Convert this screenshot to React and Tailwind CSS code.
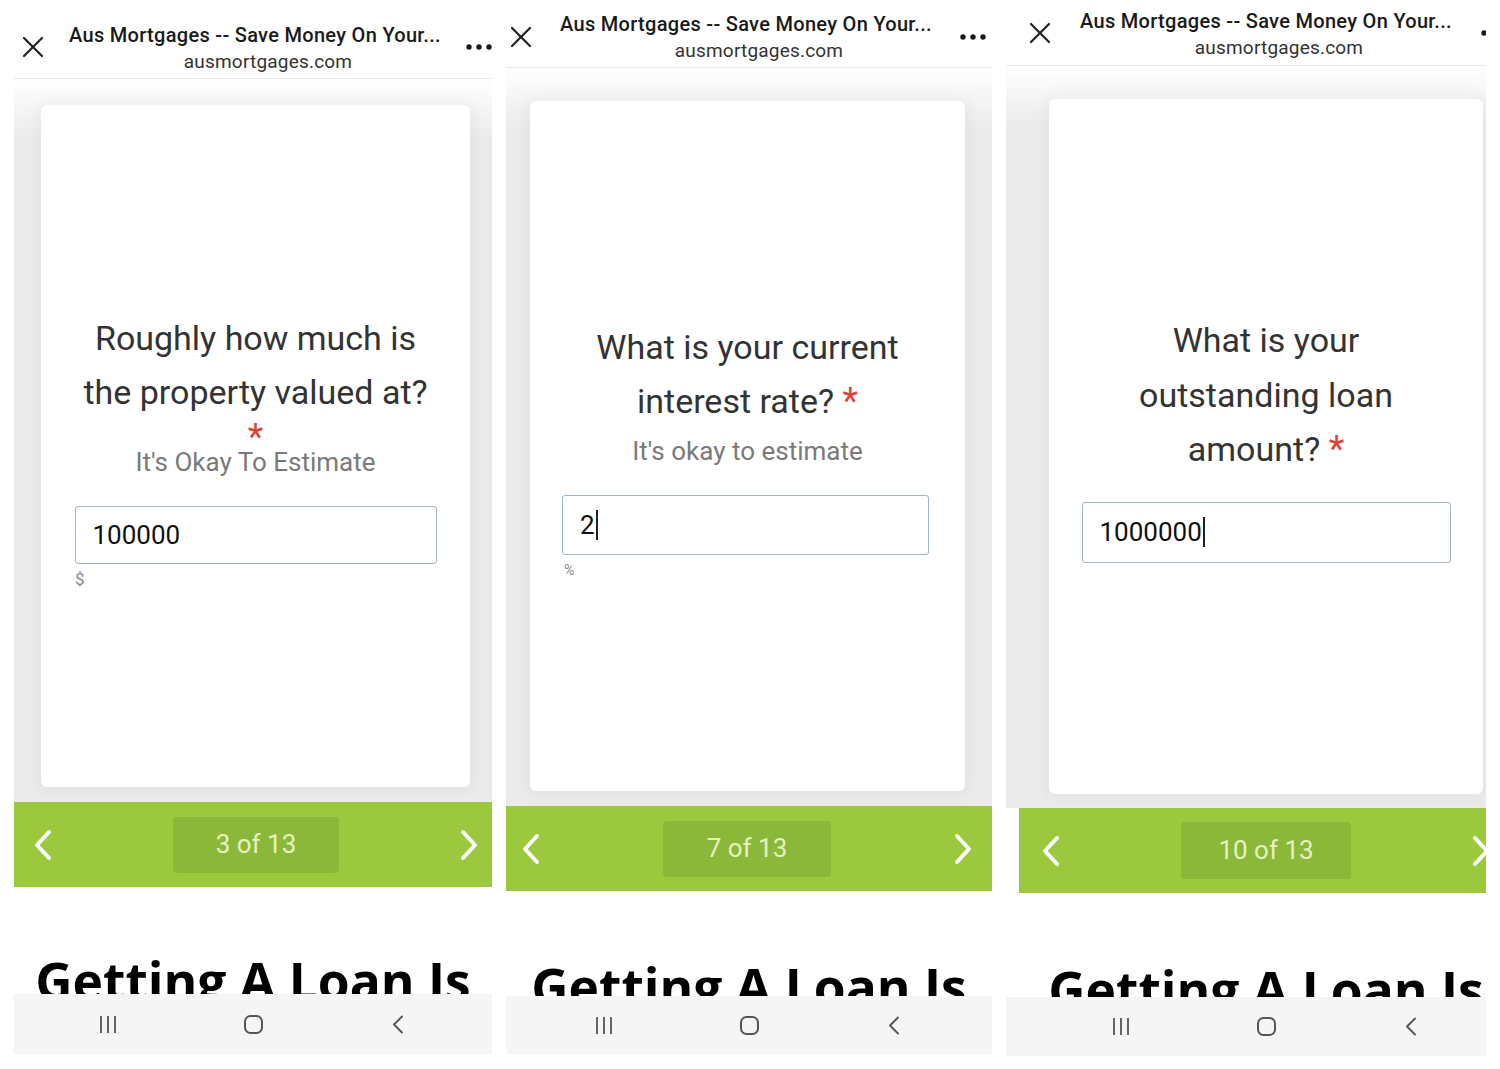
import React from 'react';

const XIcon = () => (
    <svg width="22" height="22" viewBox="0 0 22 22" fill="none" stroke="#222" strokeWidth="2.2" strokeLinecap="round">
        <line x1="2" y1="2" x2="20" y2="20" />
        <line x1="20" y1="2" x2="2" y2="20" />
    </svg>
);

const Dots = () => (
    <svg width="26" height="6" viewBox="0 0 26 6" fill="#1a1a1a">
        <circle cx="3" cy="3" r="2.7" />
        <circle cx="13" cy="3" r="2.7" />
        <circle cx="23" cy="3" r="2.7" />
    </svg>
);

const Chevron = ({ dir }) => (
    <svg width="18" height="32" viewBox="0 0 18 32" fill="none" stroke="#fff" strokeWidth="4" strokeLinecap="round" strokeLinejoin="round">
        {dir === 'left' ? <polyline points="15,3 3,16 15,29" /> : <polyline points="3,3 15,16 3,29" />}
    </svg>
);

const NavBar = ({ h }) => (
    <div className={`flex items-center justify-center gap-[127px] bg-[#f5f5f5] ${h}`}>
        <svg width="18" height="17" viewBox="0 0 18 17" fill="none" stroke="#555" strokeWidth="1.8">
            <line x1="2" y1="0" x2="2" y2="17" />
            <line x1="9" y1="0" x2="9" y2="17" />
            <line x1="16" y1="0" x2="16" y2="17" />
        </svg>
        <svg width="19" height="19" viewBox="0 0 19 19" fill="none" stroke="#555" strokeWidth="2">
            <rect x="1" y="1" width="17" height="17" rx="5.5" />
        </svg>
        <svg width="18" height="19" viewBox="0 0 18 19" fill="none" stroke="#555" strokeWidth="1.9" strokeLinecap="round" strokeLinejoin="round">
            <polyline points="12,1.5 4,9.5 12,17.5" />
        </svg>
    </div>
);

const Header = ({ h, pl, xTop, textTop, dotsTop, dotsMr }) => (
    <div className={`flex items-start border-b border-[#e8e8e8] ${h} ${pl}`}>
        <div className={xTop}><XIcon /></div>
        <div className={`flex flex-1 flex-col items-center ${textTop}`}>
            <div className="text-[20px] font-medium leading-[24px] tracking-[0.3px] text-[#1a1a1a]">Aus Mortgages -- Save Money On Your...</div>
            <div className="ml-[26px] mt-[3px] text-[19px] leading-[24px] tracking-[0.2px] text-[#333]">ausmortgages.com</div>
        </div>
        <div className={`${dotsTop} ${dotsMr}`}><Dots /></div>
    </div>
);

const Pager = ({ label, pillW, pillH, px, extra = '' }) => (
    <div className={`grid h-[85px] grid-cols-[1fr_auto_1fr] items-center bg-[#9cc83d] ${px} ${extra}`}>
        <div className="justify-self-start"><Chevron dir="left" /></div>
        <div className={`flex items-center justify-center rounded-[4px] bg-[#8bb838] text-[26px] text-[#e4f2c4] ${pillW} ${pillH}`}>{label}</div>
        <div className="justify-self-end"><Chevron dir="right" /></div>
    </div>
);

const Heading = ({ h, pt }) => (
    <div className={`overflow-hidden text-center font-['Open_Sans',sans-serif] text-[51.5px] font-bold leading-none text-black ${h} ${pt}`}>
        Getting A Loan Is
    </div>
);

const Star = () => <span className="text-[#dc4339] text-[36px]">*</span>;

const Input = ({ value, caret, w, h }) => (
    <div className={`mx-auto flex items-center rounded-[3px] border border-[#a3b4c2] bg-white pl-[17px] ${w} ${h}`}>
        <span className="text-[26px] text-[#111]">{value}</span>
        {caret && <span className="ml-[1px] h-[30px] w-[2px] bg-[#222]" />}
    </div>
);

const App = () => {
    return (
        <div className="flex h-[1069px] w-[1500px] gap-[14px] overflow-hidden bg-white pl-[14px] font-[Roboto,sans-serif]">
            {/* panel 1 */}
            <div className="w-[478px] shrink-0 overflow-hidden">
                <Header h="h-[79px]" pl="pl-[8px]" xTop="mt-[36px]" textTop="mt-[23px]" dotsTop="mt-[44px]" dotsMr="" />
                <div className="h-[723px] bg-[linear-gradient(to_bottom,#ffffff,#ebebeb_60px,#ebebeb)] pt-[26px] pl-[27px]">
                    <div className="flex h-[682px] w-[429px] flex-col rounded-[6px] bg-white shadow-[0_0_14px_4px_rgba(0,0,0,0.04)]">
                        <h2 className="mt-[206px] text-center text-[34px] leading-[54px] text-[#333]">
                            Roughly how much is<br />the property valued at?
                        </h2>
                        <div className="mt-[6px] h-[24px] text-center leading-[24px]"><Star /></div>
                        <p className="text-center text-[26px] leading-[26px] text-[#7a7a7a]">It's Okay To Estimate</p>
                        <div className="mt-[31px]">
                            <Input value="100000" w="w-[362px]" h="h-[58px]" />
                        </div>
                        <div className="ml-[34px] mt-[5px] text-[17px] leading-[20px] text-[#888]">$</div>
                    </div>
                </div>
                <Pager label="3 of 13" pillW="w-[166px]" pillH="h-[56px]" px="pl-[20px] pr-[14px]" />
                <Heading h="h-[107px]" pt="pt-[68px]" />
                <NavBar h="h-[60px]" />
            </div>

            {/* panel 2 */}
            <div className="w-[486px] shrink-0 overflow-hidden">
                <Header h="h-[68px]" pl="pl-[4px]" xTop="mt-[26px]" textTop="mt-[12px]" dotsTop="mt-[34px]" dotsMr="mr-[6px]" />
                <div className="h-[738px] bg-[linear-gradient(to_bottom,#ffffff,#ebebeb_60px,#ebebeb)] pt-[33px] pl-[24px]">
                    <div className="flex h-[690px] w-[435px] flex-col rounded-[6px] bg-white shadow-[0_0_14px_4px_rgba(0,0,0,0.04)]">
                        <h2 className="mt-[219px] text-center text-[34px] leading-[54px] text-[#333]">
                            What is your current<br />interest rate? <Star />
                        </h2>
                        <p className="mt-[8px] text-center text-[26px] leading-[30px] text-[#7a7a7a]">It's okay to estimate</p>
                        <div className="mt-[29px] pr-[4px]">
                            <Input value="2" caret w="w-[367px]" h="h-[60px]" />
                        </div>
                        <div className="ml-[34px] mt-[7px] text-[14px] leading-[16px] text-[#888]">%</div>
                    </div>
                </div>
                <Pager label="7 of 13" pillW="w-[168px]" pillH="h-[56px]" px="pl-[16px] pr-[20px]" />
                <Heading h="h-[105px]" pt="pt-[70px]" />
                <NavBar h="h-[58px]" />
            </div>

            {/* panel 3, cut off at the right edge */}
            <div className="w-[480px] shrink-0 overflow-hidden">
                <div className="w-[520px]">
                    <Header h="h-[66px]" pl="pl-[23px]" xTop="mt-[22px]" textTop="mt-[9px]" dotsTop="mt-[30px]" dotsMr="mr-[19px]" />
                    <div className="h-[742px] bg-[linear-gradient(to_bottom,#ffffff,#ebebeb_60px,#ebebeb)] pt-[33px] pl-[43px]">
                        <div className="flex h-[695px] w-[434px] flex-col rounded-[6px] bg-white shadow-[0_0_14px_4px_rgba(0,0,0,0.04)]">
                            <h2 className="mt-[214px] text-center text-[34px] leading-[54.5px] text-[#333]">
                                What is your<br />outstanding loan<br />amount? <Star />
                            </h2>
                            <div className="mt-[25px]">
                                <Input value="1000000" caret w="w-[369px]" h="h-[61px]" />
                            </div>
                        </div>
                    </div>
                    <Pager label="10 of 13" pillW="w-[170px]" pillH="h-[57px]" px="px-[23px]" extra="ml-[13px] w-[494px]" />
                    <Heading h="h-[104px]" pt="pt-[71px]" />
                    <NavBar h="h-[59px]" />
                </div>
            </div>
        </div>
    );
};

export default App;
